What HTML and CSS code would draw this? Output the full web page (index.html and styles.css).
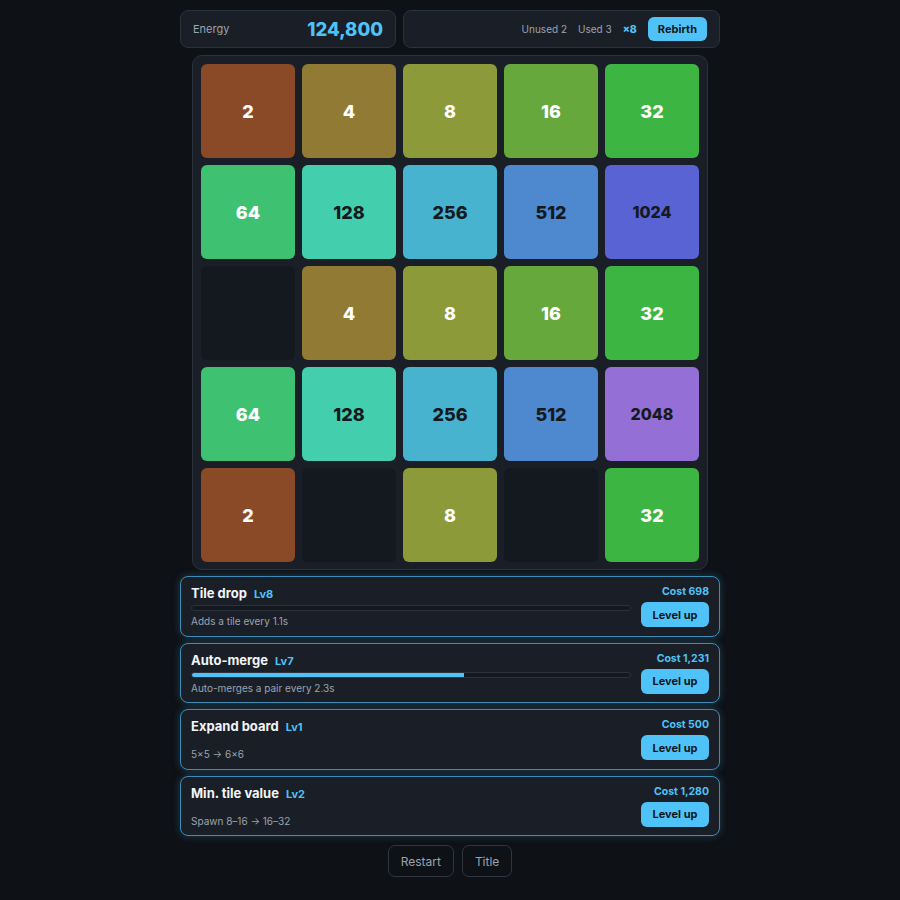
FILE: index.html
```html
<!DOCTYPE html>
<html lang="en">
<head>
    <meta charset="UTF-8">
    <meta name="viewport" content="width=device-width, initial-scale=1.0">
    <title>Merge Idle</title>
    <link rel="stylesheet" href="styles.css">
</head>
<body>
    <div class="container">
        <div class="topbar">
            <div class="panel energy">
                <span class="label">Energy</span>
                <span class="energy-value">124,800</span>
            </div>
            <div class="panel rebirth">
                <span class="stat">Unused 2</span>
                <span class="stat">Used 3</span>
                <span class="mult">×8</span>
                <button class="btn-primary btn-rebirth">Rebirth</button>
            </div>
        </div>

        <div class="board">
            <div class="tile t2">2</div>
            <div class="tile t4">4</div>
            <div class="tile t8">8</div>
            <div class="tile t16">16</div>
            <div class="tile t32">32</div>

            <div class="tile t64">64</div>
            <div class="tile t128">128</div>
            <div class="tile t256">256</div>
            <div class="tile t512">512</div>
            <div class="tile t1024">1024</div>

            <div class="tile empty"></div>
            <div class="tile t4">4</div>
            <div class="tile t8">8</div>
            <div class="tile t16">16</div>
            <div class="tile t32">32</div>

            <div class="tile t64">64</div>
            <div class="tile t128">128</div>
            <div class="tile t256">256</div>
            <div class="tile t512">512</div>
            <div class="tile t2048">2048</div>

            <div class="tile t2">2</div>
            <div class="tile empty"></div>
            <div class="tile t8">8</div>
            <div class="tile empty"></div>
            <div class="tile t32">32</div>
        </div>

        <div class="upgrades">
            <div class="upgrade">
                <div class="upgrade-info">
                    <div class="upgrade-title">Tile drop <span class="lv">Lv8</span></div>
                    <div class="bar"><div class="bar-fill" style="width: 0%"></div></div>
                    <div class="upgrade-desc">Adds a tile every 1.1s</div>
                </div>
                <div class="upgrade-action">
                    <div class="cost">Cost 698</div>
                    <button class="btn-primary btn-level">Level up</button>
                </div>
            </div>
            <div class="upgrade">
                <div class="upgrade-info">
                    <div class="upgrade-title">Auto-merge <span class="lv">Lv7</span></div>
                    <div class="bar"><div class="bar-fill" style="width: 62%"></div></div>
                    <div class="upgrade-desc">Auto-merges a pair every 2.3s</div>
                </div>
                <div class="upgrade-action">
                    <div class="cost">Cost 1,231</div>
                    <button class="btn-primary btn-level">Level up</button>
                </div>
            </div>
            <div class="upgrade">
                <div class="upgrade-info">
                    <div class="upgrade-title">Expand board <span class="lv">Lv1</span></div>
                    <div class="bar hidden"></div>
                    <div class="upgrade-desc">5×5 → 6×6</div>
                </div>
                <div class="upgrade-action">
                    <div class="cost">Cost 500</div>
                    <button class="btn-primary btn-level">Level up</button>
                </div>
            </div>
            <div class="upgrade">
                <div class="upgrade-info">
                    <div class="upgrade-title">Min. tile value <span class="lv">Lv2</span></div>
                    <div class="bar hidden"></div>
                    <div class="upgrade-desc">Spawn 8–16 → 16–32</div>
                </div>
                <div class="upgrade-action">
                    <div class="cost">Cost 1,280</div>
                    <button class="btn-primary btn-level">Level up</button>
                </div>
            </div>
        </div>

        <div class="footer">
            <button class="btn-ghost">Restart</button>
            <button class="btn-ghost">Title</button>
        </div>
    </div>
</body>
</html>
```

FILE: styles.css
```css
body {
    font-family: 'Inter', 'Noto Sans', sans-serif;
    background-color: #0e1116;
    color: #e6e9ee;
    margin: 0;
    padding: 0;
}
.container {
    width: 540px;
    margin: 0 auto;
    padding-top: 10px;
    display: flex;
    flex-direction: column;
    align-items: center;
}
.topbar {
    width: 100%;
    display: flex;
    gap: 7px;
}
.panel {
    background-color: #1a1f27;
    border: 1px solid #2b323c;
    border-radius: 8px;
    height: 36px;
    display: flex;
    align-items: center;
    box-sizing: content-box;
}
.energy {
    width: 190px;
    padding: 0 12px;
    justify-content: space-between;
}
.label {
    font-size: 11px;
    color: #9aa3ae;
}
.energy-value {
    font-size: 18.5px;
    font-weight: 800;
    color: #4fc3f7;
}
.rebirth {
    flex: 1;
    justify-content: flex-end;
    padding: 0 12px;
    gap: 11px;
}
.stat {
    font-size: 10px;
    color: #9aa3ae;
}
.mult {
    font-size: 10.5px;
    font-weight: 800;
    color: #4fc3f7;
}
.btn-primary {
    font-family: inherit;
    background-color: #4fc3f7;
    color: #0f151c;
    border: none;
    border-radius: 6px;
    font-weight: 700;
    cursor: pointer;
}
.btn-rebirth {
    height: 24px;
    padding: 0 10px;
    font-size: 11px;
}
.board {
    margin-top: 7px;
    background-color: #1a1f27;
    border: 1px solid #2b323c;
    border-radius: 10px;
    padding: 8px 8px 7px 8px;
    display: grid;
    grid-template-columns: repeat(5, 94px);
    grid-auto-rows: 94px;
    gap: 7px;
}
.tile {
    border-radius: 6px;
    display: flex;
    align-items: center;
    justify-content: center;
    font-size: 18px;
    font-weight: 800;
    color: #ffffff;
}
.empty { background-color: #141920; }
.t2 { background-color: #8a4a28; }
.t4 { background-color: #917b34; }
.t8 { background-color: #8c9a3a; }
.t16 { background-color: #67a83c; }
.t32 { background-color: #3db543; }
.t64 { background-color: #3ec272; }
.t128 { background-color: #43cfae; color: #141a20; }
.t256 { background-color: #47b3cf; color: #141a20; }
.t512 { background-color: #4e88cf; color: #141a20; }
.t1024 { background-color: #5a63d3; color: #141a20; font-size: 16px; }
.t2048 { background-color: #9470d6; color: #141a20; font-size: 16px; }
.upgrades {
    width: 100%;
    margin-top: 6px;
    display: flex;
    flex-direction: column;
    gap: 6px;
}
.upgrade {
    background-color: #1a1f27;
    border: 1.5px solid #3b8db8;
    border-radius: 8px;
    box-shadow: 0 0 8px rgba(79, 195, 247, 0.25);
    padding: 8px 10px;
    display: flex;
    align-items: center;
    gap: 10px;
    height: 42.5px;
    box-sizing: content-box;
}
.upgrade-info {
    flex: 1;
}
.upgrade-title {
    font-size: 13px;
    font-weight: 700;
    color: #f2f4f7;
}
.lv {
    font-size: 11px;
    font-weight: 700;
    color: #4fc3f7;
    margin-left: 4px;
}
.bar {
    margin-top: 4px;
    height: 4px;
    background-color: #141920;
    border: 1px solid #2b323c;
    border-radius: 3px;
    overflow: hidden;
}
.bar.hidden {
    visibility: hidden;
}
.bar-fill {
    height: 100%;
    background-color: #4fc3f7;
}
.upgrade-desc {
    margin-top: 4px;
    font-size: 10px;
    color: #9aa3ae;
}
.upgrade-action {
    display: flex;
    flex-direction: column;
    align-items: flex-end;
    gap: 4px;
}
.cost {
    font-size: 10.5px;
    font-weight: 700;
    color: #4fc3f7;
}
.btn-level {
    width: 68px;
    height: 25px;
    font-size: 11px;
}
.footer {
    margin-top: 9px;
    display: flex;
    gap: 8px;
}
.btn-ghost {
    font-family: inherit;
    background: transparent;
    border: 1px solid #2f3640;
    border-radius: 7px;
    color: #9aa3ae;
    font-size: 12px;
    height: 32px;
    padding: 0 12px;
    cursor: pointer;
}
```
